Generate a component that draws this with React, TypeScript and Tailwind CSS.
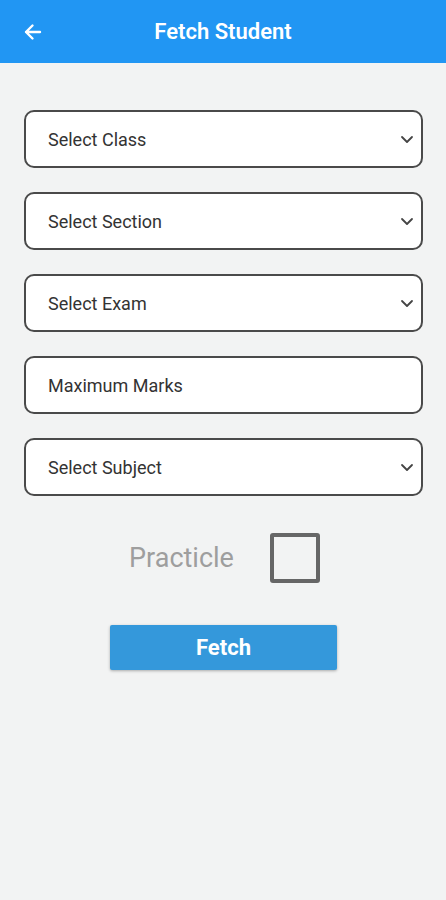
import React from "react";

function Chevron() {
  return (
    <svg width="14" height="10" viewBox="0 0 14 10" className="shrink-0">
      <path d="M2 3 L7 8 L12 3" fill="none" stroke="#444" strokeWidth="1.8" strokeLinecap="round" strokeLinejoin="round" />
    </svg>
  );
}

function Field({ label, select = true }: { label: string; select?: boolean }) {
  return (
    <div className="flex h-[58px] items-center justify-between rounded-[10px] border-2 border-[#4a4a4a] bg-white pl-[22px] pr-[7px]">
      <span className="text-[18px] text-[#333]">{label}</span>
      {select && <Chevron />}
    </div>
  );
}

export default function App() {
  return (
    <div className="min-h-[900px] w-full bg-[#f2f3f3]" style={{ fontFamily: "Roboto, 'Liberation Sans', sans-serif" }}>
      <div className="relative flex h-[63px] items-center justify-center bg-[#2196f3]">
        <svg className="absolute left-[23px] top-[23px]" width="19" height="18" viewBox="0 0 19 18">
          <path d="M17 9 H3 M9.5 2.5 L3 9 L9.5 15.5" fill="none" stroke="white" strokeWidth="2.4" strokeLinecap="round" strokeLinejoin="round" />
        </svg>
        <span className="text-[22px] font-semibold text-white">Fetch Student</span>
      </div>
      <div className="flex flex-col gap-[24px] pl-[24px] pr-[23px] pt-[47px]">
        <Field label="Select Class" />
        <Field label="Select Section" />
        <Field label="Select Exam" />
        <Field label="Maximum Marks" select={false} />
        <Field label="Select Subject" />
      </div>
      <div className="mt-[37px] flex items-center justify-center gap-[36px] pl-[3px]">
        <span className="text-[27px] text-[#9e9e9e]">Practicle</span>
        <div className="h-[50px] w-[50px] rounded-[3px] border-[4px] border-[#666]" />
      </div>
      <div className="mt-[42px] flex pl-[110px]">
        <div className="flex h-[45px] w-[227px] items-center justify-center rounded-[2px] bg-[#3498db] shadow-[0_1px_3px_rgba(0,0,0,0.3)]">
          <span className="text-[22px] font-bold text-white">Fetch</span>
        </div>
      </div>
    </div>
  );
}
